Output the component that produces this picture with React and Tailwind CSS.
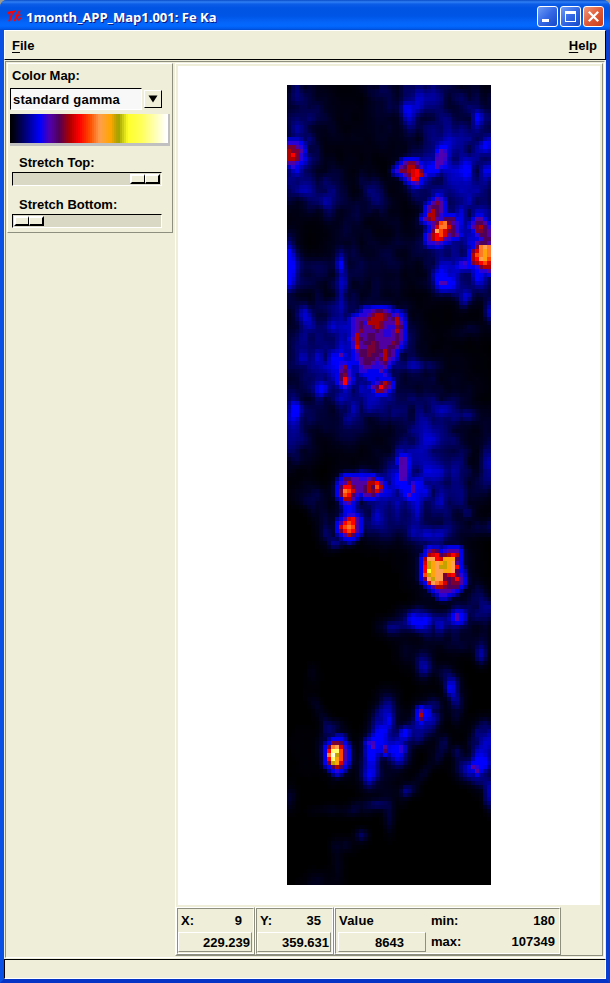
import React from 'react';

const COLS = 51;
const ROWS = 200;

// Gamma colour table: position (0-100), r, g, b
const TABLE = [
  [0, 0, 0, 0],
  [3, 0, 0, 30],
  [19, 0, 0, 255],
  [25, 80, 0, 176],
  [31, 80, 0, 88],
  [38, 176, 0, 0],
  [44, 255, 0, 0],
  [51, 255, 80, 0],
  [57, 255, 160, 80],
  [64, 255, 165, 0],
  [69, 160, 160, 0],
  [75, 255, 255, 40],
  [84, 255, 255, 90],
  [100, 255, 255, 255],
];

function colorAt(v) {
  const x = Math.max(0, Math.min(100, v));
  let i = 1;
  while (i < TABLE.length - 1 && TABLE[i][0] < x) i += 1;
  const a = TABLE[i - 1];
  const b = TABLE[i];
  const t = (x - a[0]) / (b[0] - a[0]);
  const mix = (k) => Math.round(a[k] + (b[k] - a[k]) * t);
  return `rgb(${mix(1)},${mix(2)},${mix(3)})`;
}

// Diffuse regions: column, row, x spread, y spread, strength, slant
const BLOBS = [
  [1, 2, 4, 8, 6], [2, 10, 5, 6, 5], [2, 17, 2.4, 3.4, 14], [10, 26, 3, 4, 8], [10, 31, 1.2, 2, 6],
  [3, 25, 4, 4, 4], [42, 12, 8, 14, 3.5], [45, 34, 6, 12, 4], [30, 4, 6, 5, 2.5],
  [17, 32, 1.2, 2, 8], [21, 27, 2.4, 4, 8, 0.3], [14, 36, 2, 4, 4], [0, 45, 1.7, 5, 20], [13, 46, 0.9, 3, 11],
  [3, 25, 3, 4, 5], [30, 7, 1.3, 3, 13], [33, 2, 3, 4, 6], [24, 8, 1.5, 4, 4], [22, 1, 2, 1.5, 4],
  [38, 10, 4, 9, 4], [47, 10, 4, 10, 4], [48, 7.5, 1.2, 1.4, 12], [49, 14, 1, 1.4, 12],
  [38.2, 18, 1.7, 2.6, 24, -0.4], [31, 21, 2.4, 2.6, 11], [32, 25, 1.3, 2, 8], [44, 21, 1, 2, 8],
  [42, 24, 6, 6, 5], [50, 22, 1.3, 4, 8], [38, 34, 3, 5, 12], [42, 33, 1.5, 5, 7], [48, 35, 2.2, 3, 11],
  [48, 42, 2.6, 4, 13], [43, 44.5, 2, 1.1, 14], [38, 47, 1.2, 2, 8], [48, 47, 1.2, 2.5, 9],
  [25, 40, 10, 6, 3.2], [16, 10, 10, 8, 1.8], [6, 47, 3, 3, 5], [18, 46, 6, 5, 2.5],
  [13, 54, 0.8, 9, 9], [4, 57, 1, 1.4, 12], [6, 57, 3, 3, 6], [4, 65, 6, 4, 7], [9, 71, 5, 6, 5.5],
  [12, 65, 2.5, 7, 7], [8, 76, 1, 1.8, 11], [3, 68, 1.2, 1.2, 6], [1, 80, 1.3, 2.2, 14], [1, 87, 2.7, 5, 10],
  [7, 80, 6, 8, 3.5], [10, 58, 6, 8, 2.5],
  [20, 78, 4, 4, 9], [15, 83, 2.5, 4, 6], [26, 82, 1.1, 1.5, 10], [14, 71, 1.6, 3.6, 10], [26, 77, 2.5, 2, 6],
  [22, 63, 6, 6.5, 13], [35, 69.8, 1, 0.8, 8], [31, 69.5, 3.5, 1, 6], [37, 76, 8, 7, 3.4], [39, 80, 2, 2, 4],
  [44, 81.7, 1.4, 1, 9], [34, 85, 4, 5, 5], [39, 49.5, 1.9, 1.6, 14], [44, 53, 1.1, 1.7, 11],
  [42, 47, 6, 4, 6], [50, 56, 0.8, 2, 12], [45, 61, 3.2, 1.5, 4], [28.5, 93.5, 1.1, 2.1, 17],
  [28, 97, 2, 3, 9], [34, 91, 4, 5, 4], [49, 96, 1.1, 3, 11], [50, 92, 1.5, 5, 6], [43, 95, 2, 3, 4],
  [38, 92, 4, 5, 3], [20, 98, 3, 1.2, 13], [32, 84, 8, 7, 2], [41, 85, 6, 4, 2.5], [24, 92, 5, 4, 2],
  [15, 101, 2.3, 3, 13], [20, 100, 3.4, 2, 13], [15, 109, 2.3, 2.8, 12], [15, 105, 1, 2, 11],
  [26, 104, 5, 6, 8], [32, 99.5, 4, 3.4, 9], [30, 104, 1, 2, 10], [22, 108, 1.7, 2, 6], [31, 108, 1.2, 3, 8],
  [37, 102, 6, 6, 4.5], [24, 109, 5, 3, 3],
  [38, 101, 1.8, 4, 6], [43, 102, 3, 4, 5], [44, 106.5, 1, 1, 5], [38, 111, 3.4, 1.8, 8], [34, 113, 2.2, 2, 6],
  [5, 102, 3, 2, 4], [7, 106, 1.5, 3.5, 5, 0.3], [10, 112, 1.6, 2.4, 7], [12, 114, 1.2, 1, 7],
  [49, 110, 3, 1.5, 6], [38.5, 121, 4.4, 5, 9], [47, 129, 1.2, 2.7, 9], [50, 131, 1.5, 3, 8],
  [42.5, 132.5, 1.8, 2, 19], [30.6, 133, 2.3, 1.8, 14], [35, 134.5, 2.3, 1.9, 12], [38, 133, 4, 1.8, 7],
  [25, 135, 2, 1.7, 8], [42, 138, 6, 2.6, 5], [33.5, 144.5, 1.3, 2.4, 13], [29, 141, 2, 3, 2.5],
  [48, 142, 1, 1.8, 9], [39, 147, 2, 2, 5], [6, 147, 1.2, 2, 2],
  [40.5, 150, 1.1, 2, 14], [42, 154, 1.3, 3, 9], [33.7, 157.5, 1.9, 2.5, 15], [36, 156, 1.4, 2, 11],
  [32, 161, 1.9, 2, 12], [24.5, 157, 1.9, 3.2, 14], [23, 161, 1.9, 3, 11], [20.3, 164, 1.4, 1.8, 14],
  [20.5, 168, 1.6, 3, 13], [20, 173, 1.4, 1.8, 12], [25, 165.5, 2.2, 1.8, 14], [28.5, 164, 1.7, 2.4, 13],
  [29, 161.5, 1, 1.2, 9], [27.5, 168, 1.3, 1.8, 8], [8, 157, 1.2, 3, 5, 0.5], [11, 160, 1.5, 1.3, 5],
  [12, 167, 2.3, 3.3, 11], [9, 165, 1.1, 2.3, 6], [30, 176, 1.3, 1, 8], [34, 171, 1.2, 4, 4, -0.8],
  [37, 165, 1.5, 3, 4], [39, 163.5, 0.8, 1.4, 5], [48.5, 163, 1.8, 2.8, 12], [46, 170.5, 2.4, 1.9, 17],
  [49, 168, 2.4, 4.5, 11], [50, 177, 0.8, 2.4, 14], [42, 166, 1, 1.4, 7], [14, 181, 5, 1, 4],
  [21, 179.3, 3, 0.9, 6], [0, 178, 1, 2, 5], [25, 183, 1, 3, 3.5], [18, 187, 1.2, 1.2, 6],
  [14, 189.5, 2, 1.3, 4], [12, 193, 1, 3, 3.5], [8, 199, 3.4, 2, 3], [24, 173, 4, 4, 3], [4, 166, 4, 5, 0.8],
];

const LEVELS = {
  a: 12, n: 15, b: 18, v: 22, p: 26, m: 31, d: 34, r: 38, e: 41, R: 44,
  o: 50, O: 54, t: 57, g: 63, k: 67, y: 75, Y: 86, W: 97,
};

// Intense particles: column, row, one string of levels for each row
const SPOTS = [
  [0, 14, ['vvvb', 'ddpv', 'rddp', 'rRdv', 'rrdv', 'ppvb', 'nvb']],
  [27, 19, ['..pddp..', '.pmrrmv.', 'vddreRd.', '..pdeRrv', '...pReb.', '....vpb.']],
  [34, 28, [
    '...pv', '..pdp', '.pmmp', '.prmp', '.rrmv', 'pdrpvmmm', '.vpdoOdpv',
    '..peOOemv', '..dtoedmv', '.prRoepmp', '.prRepv', '.vvpv',
  ]],
  [46, 33, [
    '.pp..', 'vmmp', 'pdrmv', '.ddmp', '.vmmp', '..vmm', '.pmmp', '.dOtO', 'deOgO', 'roOgO', 'rRtgo',
    'drRoe', '.vdrr', '..vvp',
  ]],
  [16, 56, [
    '...vvpmmpv...', '..vvpdrrdmvpb', 'vpppdrrrdpmrv', 'vpmvrrrdppprp', 'vpmppdrdpvvdm', 'vpdpppmpvvprp',
    'vrppmmppvvpmp', 'prmpmmpppppmp', 'vrpmmdmpppdmv', 'veppddmppmmpb', 'bpmmddmmrmp..', 'bvmmdmmprmp..',
    'bvpmmmpmrpv..', 'bbpmmpvpmv...', '..vppvvvp....', '..vvbbbp.....', '..nbbbbbv....', '....bbn......',
  ]],
  [13, 67, ['p']],
  [13, 70, ['.d.', 'pmv', 'mdv', 'mRp', 'pRv', '.v.']],
  [21, 74, ['.vmrm', 'pmRdp', '.ddpb']],
  [28, 93, ['p', 'p']],
  [19, 98, ['vpm']],
  [14, 98, ['mmpp']],
  [13, 99, ['vprpp', 'mRRdp', 'dOoep', 'doRmv', '.rrp', '.vp']],
  [18, 99, ['pprrRp', 'pmrmor', 'pmrdep', '.ppmv']],
  [31, 99, ['v', 'p', 'p']],
  [13, 107, ['..vv', '.peRp', 'pRoRp', 'eoOop', 'dRoRp', '.prm', '..b']],
  [34, 115, [
    '..nn', '.pdm.vppp', '.reRmdrRr', 'rttRegggm', 'ekgtgkgtp', 'RkgtkkgtR', 'Rygttggtmb',
    'okgttdeRmv', 'dtkttdmdRp', '.etOoemddp', '..prrdmmm', '...vpppv', '....vv',
  ]],
  [10, 163, ['..bb', '.ddm', 'dOtev', 'RYYop', 'OWkop', 'RYgop', 'dkgev', '.mrm', '..v']],
  [33, 156, ['p', 'r', 'm']],
  [24, 165, ['p', 'm']],
  [20, 164, ['v']],
  [28, 165, ['v', 'v']],
  [46, 170, ['pv', '.p']],
];

function grain(x, y) {
  const s = Math.sin(x * 12.9898 + y * 78.233) * 43758.5453;
  return s - Math.floor(s);
}

function smoothGrain(x, y) {
  const gx = Math.floor(x);
  const gy = Math.floor(y);
  const fx = x - gx;
  const fy = y - gy;
  const top = grain(gx, gy) * (1 - fx) + grain(gx + 1, gy) * fx;
  const low = grain(gx, gy + 1) * (1 - fx) + grain(gx + 1, gy + 1) * fx;
  return top * (1 - fy) + low * fy;
}

function buildField() {
  const field = [];
  for (let r = 0; r < ROWS; r += 1) {
    const row = [];
    for (let c = 0; c < COLS; c += 1) {
      let sum = 0;
      for (const [cx, cy, sx, sy, amp, slant = 0] of BLOBS) {
        const dy = r - cy;
        const dx = c - cx - slant * dy;
        const d = (dx * dx) / (sx * sx) + (dy * dy) / (sy * sy);
        if (d < 9) sum += amp * Math.exp(-d * 0.5);
      }
      const texture = 0.4 + smoothGrain(c / 1.8, r / 2.6) * 1.0;
      const v = Math.min(sum * texture, sum > 22 ? 25 : 19);
      row.push(v < 0.3 ? 0 : v);
    }
    field.push(row);
  }
  const fixed = new Set();
  for (const [c0, r0, lines] of SPOTS) {
    lines.forEach((line, j) => {
      [...line].forEach((ch, i) => {
        if (ch !== '.' && c0 + i < COLS) {
          field[r0 + j][c0 + i] = LEVELS[ch];
          fixed.add((r0 + j) * COLS + c0 + i);
        }
      });
    });
  }
  // Halo of falling intensity round every particle
  for (const key of fixed) {
    const r0 = Math.floor(key / COLS);
    const c0 = key % COLS;
    const level = Math.min(field[r0][c0], 27);
    for (let dr = -2; dr <= 2; dr += 1) {
      for (let dc = -2; dc <= 2; dc += 1) {
        const r = r0 + dr;
        const c = c0 + dc;
        if (r >= 0 && r < ROWS && c >= 0 && c < COLS && !fixed.has(r * COLS + c)) {
          const dist = Math.hypot(dr, dc);
          const fall = level * Math.exp(-0.42 * dist * dist);
          field[r][c] = Math.max(field[r][c], Math.min(fall, 19));
        }
      }
    }
  }
  return field;
}

const FIELD = buildField();

function HeatMap() {
  return (
    <svg width="204" height="800" viewBox="0 0 51 200" shapeRendering="crispEdges" className="block bg-black">
      {FIELD.map((row, r) =>
        row.map((v, c) => (v > 0 ? <rect key={`${r}-${c}`} x={c} y={r} width="1" height="1" fill={colorAt(v)} /> : null)),
      )}
    </svg>
  );
}

function ColorStrip() {
  return (
    <div className="flex h-8 w-40 border-r-2 border-b-[3px] border-[#c0c0c0]">
      {Array.from({ length: 79 }, (_, i) => (
        <div key={i} className="h-full w-[2px]" style={{ background: colorAt((i / 78) * 100) }} />
      ))}
    </div>
  );
}

function Thumb() {
  return (
    <div className="flex h-[10px] w-[30px]">
      <div className="h-full w-[15px] border-t-2 border-r border-b-2 border-l-2 border-t-white border-r-black border-b-black border-l-white bg-[#efeed8]" />
      <div className="h-full w-[15px] border-t-2 border-r-2 border-b-2 border-l border-t-white border-r-black border-b-black border-l-white bg-[#efeed8]" />
    </div>
  );
}

function Slider({ end }) {
  return (
    <div
      className={`flex h-[14px] w-[150px] border border-t-black border-r-white border-b-white border-l-black bg-[#d9d8c4] px-px pt-px ${
        end ? 'justify-end' : 'justify-start'
      }`}
    >
      <Thumb />
    </div>
  );
}

function Ridge({ className, children }) {
  return (
    <div className={`h-12 border border-t-white border-r-[#8f8f80] border-b-[#8f8f80] border-l-white ${className}`}>
      <div className="h-full border border-t-[#8f8f80] border-r-white border-b-white border-l-[#8f8f80]">{children}</div>
    </div>
  );
}

function Readout({ className, children }) {
  return (
    <div
      className={`h-5 border border-t-white border-r-[#8f8f80] border-b-[#8f8f80] border-l-white text-right leading-[19px] ${className}`}
    >
      {children}
    </div>
  );
}

function AxisBox({ label, index, value }) {
  return (
    <Ridge className="w-[79px]">
      <div className="flex h-[23px] justify-between pr-[11px] pl-[3px] leading-[24px]">
        <span>{label}</span>
        <span>{index}</span>
      </div>
      <Readout className="w-[74px] pr-px">{value}</Readout>
    </Ridge>
  );
}

function TitleButton({ close, children }) {
  return (
    <div
      className={`flex h-[21px] w-[21px] items-center justify-center rounded-[3px] border border-white bg-linear-to-br ${
        close ? 'from-[#ee9a7c] via-[#df5a38] to-[#c83c14]' : 'from-[#6f9cf5] via-[#3468e4] to-[#1548c8]'
      }`}
    >
      <svg width="19" height="19" viewBox="0 0 19 19" shapeRendering={close ? 'auto' : 'crispEdges'}>
        {children}
      </svg>
    </div>
  );
}

function TitleBar() {
  return (
    <div className="flex h-[30px] items-center rounded-t-[7px] bg-[linear-gradient(180deg,#0a4bc8_0px,#2f7ff4_2px,#0c5ee8_4px,#0054e3_8px,#0055e6_16px,#0566fb_23px,#0368ff_26px,#0058e8_29px,#0048cc_30px)] pt-[3px] pr-[6px] pl-[7px]">
      <svg width="15" height="13" viewBox="0 0 15 13" className="mr-[4px]" fill="none" stroke="#ff0000" strokeLinecap="round">
        <path d="M1 3.4C2.8 1 4.6 2.8 7.6 1.4M5.2 2.6C4.6 5 4 7.5 2.4 10.6" strokeWidth="2" />
        <path d="M12.6 1C11 1.6 9.4 6 7.8 10.4M8.6 7.6C10.2 6.4 11.8 4.6 12.8 5M9.6 7C10.6 7.4 10 9.8 11.2 10 12 10 12.6 9 13.2 8.2" strokeWidth="1.7" />
      </svg>
      <div className="w-[200px] font-['Open_Sans','Noto_Sans',sans-serif] text-[13px] leading-4 font-bold whitespace-nowrap text-white [text-shadow:1px_1px_0_#0a1883]">
        1month_APP_Map1.001: Fe Ka
      </div>
      <div className="ml-auto flex gap-[2px]">
        <TitleButton>
          <rect x="4" y="12" width="7" height="3" fill="#fff" />
        </TitleButton>
        <TitleButton>
          <path d="M4 4h11v11H4zM5 7v7h9V7z" fill="#fff" fillRule="evenodd" />
        </TitleButton>
        <TitleButton close>
          <path d="M4.8 4.8L14.2 14.2M14.2 4.8L4.8 14.2" stroke="#fff" strokeWidth="2.2" />
        </TitleButton>
      </div>
    </div>
  );
}

function Controls() {
  return (
    <div className="h-[170px] w-[166px] border border-t-white border-r-[#8f8f80] border-b-[#8f8f80] border-l-white pl-[2px]">
      <div className="h-[24px] pl-[2px] leading-[23px]">Color Map:</div>
      <div className="flex h-[22px] items-center gap-[2px]">
        <div className="h-[22px] w-[132px] border border-t-black border-r-white border-b-white border-l-black bg-[#f8f8f8] pl-[2px] leading-[21px] tracking-[0.2px]">
          standard gamma
        </div>
        <div className="flex h-[18px] w-[18px] items-center justify-center border border-t-white border-r-black border-b-black border-l-white">
          <svg width="10" height="8" viewBox="0 0 10 8">
            <path d="M0.5 0.5h9L5 7.5z" fill="#000" />
          </svg>
        </div>
      </div>
      <div className="pt-1">
        <ColorStrip />
      </div>
      <div className="h-[26px] pl-[9px] leading-[34px]">Stretch Top:</div>
      <div className="pl-[2px]">
        <Slider end />
      </div>
      <div className="h-[28px] pl-[9px] leading-[38px]">Stretch Bottom:</div>
      <div className="pl-[2px]">
        <Slider />
      </div>
    </div>
  );
}

export default function App() {
  return (
    <div className="h-[983px] w-[610px] overflow-hidden bg-[#9a9a90] font-['Liberation_Sans',Arial,sans-serif] text-[13px] font-bold text-black">
      <div className="flex h-full flex-col rounded-t-[7px] bg-[#0a50e0]">
        <TitleBar />
        <div className="flex h-[953px] flex-col border-r-4 border-b-4 border-l-4 border-r-[#0a3ed0] border-b-[#0634c4] border-l-[#0a50e4] bg-[#efeed8]">
          <div className="flex h-[30px] items-center justify-between border border-t-white border-r-black border-b-black border-l-white pt-[2px] pr-[8px] pl-[7px]">
            <span>
              <span className="underline underline-offset-2">F</span>ile
            </span>
            <span>
              <span className="underline underline-offset-2">H</span>elp
            </span>
          </div>
          <div className="flex h-[899px] pt-px pl-px">
            <div className="flex h-[897px] w-[600px] border border-t-[#8f8f80] border-r-white border-b-white border-l-[#8f8f80] pt-px pl-px">
              <Controls />
              <div className="ml-[2px] h-[893px] w-[428px] border border-t-white border-r-[#8f8f80] border-b-[#8f8f80] border-l-white">
                <div className="mt-[2px] ml-[2px] flex h-[839px] w-[422px] justify-center bg-white pt-[19px]">
                  <HeatMap />
                </div>
                <div className="mt-[2px] flex">
                  <AxisBox label="X:" index="9" value="229.239" />
                  <AxisBox label="Y:" index="35" value="359.631" />
                  <Ridge className="w-[227px]">
                    <div className="grid grid-cols-[92px_60px_1fr] grid-rows-[23px_20px] pr-[4px] pl-[3px]">
                      <span className="leading-[24px] tracking-[0.2px]">Value</span>
                      <span className="leading-[24px]">min:</span>
                      <span className="text-right leading-[24px]">180</span>
                      <Readout className="-ml-px w-[88px] pr-[21px]">8643</Readout>
                      <span className="leading-[20px]">max:</span>
                      <span className="text-right leading-[20px]">107349</span>
                    </div>
                  </Ridge>
                </div>
              </div>
            </div>
          </div>
          <div className="h-5 border border-t-black border-r-white border-b-white border-l-black" />
        </div>
      </div>
    </div>
  );
}
